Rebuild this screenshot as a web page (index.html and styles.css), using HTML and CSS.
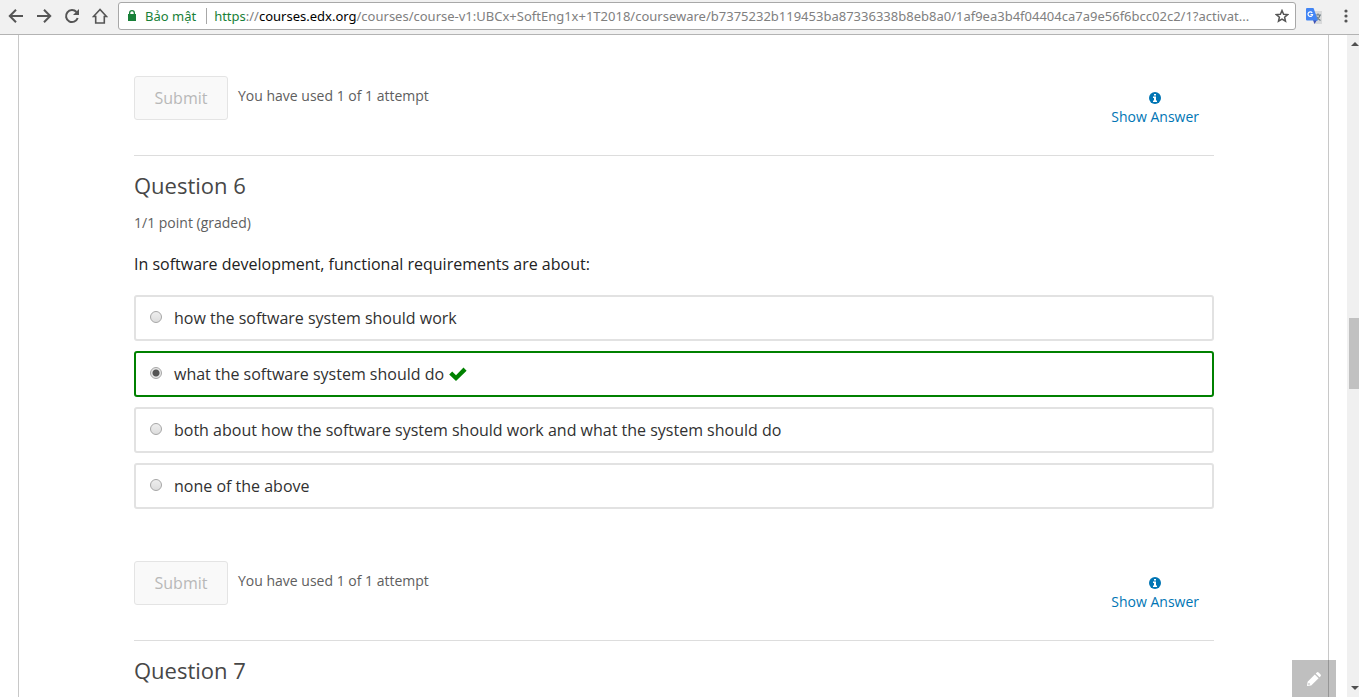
FILE: index.html
```
<!DOCTYPE html>
<html lang="en">
<head>
<meta charset="utf-8">
<title>Courseware</title>
<link rel="stylesheet" href="styles.css">
</head>
<body>
<header class="toolbar">
  <nav class="nav-buttons">
    <button class="tool" aria-label="Back"><svg viewBox="0 0 16 16"><path d="M15 8H2M8 1.800L1.800 8L8 14.200"/></svg></button>
    <button class="tool" aria-label="Forward"><svg viewBox="0 0 16 16"><path d="M1 8h13M8 1.800L14.200 8L8 14.200"/></svg></button>
    <button class="tool" aria-label="Reload"><svg viewBox="0 0 16 16"><path d="M12.500 4A6 6 0 1 0 13.700 10"/><path class="solid" d="M15 1v6H9z"/></svg></button>
    <button class="tool home" aria-label="Home"><svg viewBox="0 0 16 16"><path d="M8 1.500L1.500 8.500h2.200V15h8.600V8.500h2.200z"/></svg></button>
  </nav>
  <div class="address">
    <svg class="lock" viewBox="0 0 8 11"><path fill="#188038" d="M0 4h1V3a3 3 0 0 1 6 0v1h1v7H0zM2.300 4h3.400V3a1.700 1.700 0 0 0-3.400 0z"/></svg>
    <span class="secure" lang="vi">Bảo mật</span>
    <div class="url" role="textbox" aria-label="Address"><span class="scheme">https</span>://<span class="host">courses.edx.org</span>/courses/course-v1:UBCx+SoftEng1x+1T2018/courseware/b7375232b119453ba87336338b8eb8a0/1af9ea3b4f04404ca7a9e56f6bcc02c2/1?activat...</div>
    <button class="star" aria-label="Bookmark"><svg viewBox="0 0 14 14"><path d="M7 1.500l1.600 3.700 4 .4-3 2.600.9 4L7 10.100l-3.500 2.100.9-4-3-2.600 4-.4z"/></svg></button>
  </div>
  <button class="translate" aria-label="Translate"><svg viewBox="0 0 16 16"><path fill="#d9dadb" d="M5 3h11v13H8z"/><path fill="none" stroke="#6c7c84" stroke-width="1.200" d="M9 7h6M12 5.500V7M14 7c-.5 2.500-2 4-4 5M10.500 8.500c.8 1.800 2 3 4 4"/><path fill="#3f51b5" d="M7 12h4l-2.500 4z"/><path fill="#4285f4" d="M1 0h6.500L12 12.500H1a1 1 0 0 1-1-1V1a1 1 0 0 1 1-1z"/><path fill="none" stroke="#fff" stroke-width="1.200" d="M6.200 4.800A2.300 2.300 0 1 0 6.600 6.500H4.500"/></svg></button>
  <button class="menu" aria-label="Menu"><svg viewBox="0 0 4 14"><circle cx="2" cy="2" r="1.600"/><circle cx="2" cy="7" r="1.600"/><circle cx="2" cy="12" r="1.600"/></svg></button>
</header>
<div class="viewport">
  <main class="page">
    <section class="problem">
      <div class="actions">
        <button class="submit" disabled>Submit</button>
        <span class="attempts">You have used 1 of 1 attempt</span>
        <button class="show-answer"><svg viewBox="0 0 12 12"><circle cx="6" cy="6" r="6" fill="#0075b4"/><path fill="#fff" d="M5 2h2v1.500H5zM4 4.500h3V8.500h1V10H4V8.500h1V6H4z"/></svg>Show Answer</button>
      </div>
    </section>
    <section class="problem">
      <h3 class="title">Question 6</h3>
      <p class="points">1/1 point (graded)</p>
      <fieldset class="choices">
        <legend class="prompt">In software development, functional requirements are about:</legend>
        <label class="choice"><input type="radio" name="q6"><span>how the software system should work</span></label>
        <label class="choice correct"><input type="radio" name="q6" checked><span>what the software system should do</span><svg viewBox="0 0 18 14"><path fill="#008100" d="M3.200 4.400L7 8.200 14.500 .6 17.600 3.700 7 14 .2 7.400z"/></svg></label>
        <label class="choice"><input type="radio" name="q6"><span>both about how the software system should work and what the system should do</span></label>
        <label class="choice"><input type="radio" name="q6"><span>none of the above</span></label>
      </fieldset>
      <div class="actions">
        <button class="submit" disabled>Submit</button>
        <span class="attempts">You have used 1 of 1 attempt</span>
        <button class="show-answer"><svg viewBox="0 0 12 12"><circle cx="6" cy="6" r="6" fill="#0075b4"/><path fill="#fff" d="M5 2h2v1.500H5zM4 4.500h3V8.500h1V10H4V8.500h1V6H4z"/></svg>Show Answer</button>
      </div>
    </section>
    <section class="problem">
      <h3 class="title">Question 7</h3>
    </section>
  </main>
  <div class="scrollbar" aria-hidden="true">
    <svg class="arrow" viewBox="0 0 8 4"><path d="M0 4l4-4 4 4z"/></svg>
    <div class="track"><div class="thumb"></div></div>
    <svg class="arrow" viewBox="0 0 8 4"><path d="M0 0h8L4 4z"/></svg>
  </div>
  <button class="edit" aria-label="Edit notes"><svg viewBox="0 0 16 16"><path fill="#fff" d="M1 15l.6-4.200L8.800 3.400l3.800 3.800-7.400 7.300zM9.700 2.500l1.100-1.100q.9-.8 1.800 0l2 2q.8.900 0 1.800l-1.100 1.100z"/><path fill="#bfbfbf" d="M2.300 12.300h1.400v1.400H2.300z"/></svg></button>
</div>
</body>
</html>
```
FILE: styles.css
```
* { box-sizing: border-box; }
body {
  margin: 0;
  height: 100vh;
  display: flex;
  flex-direction: column;
  overflow: hidden;
  background: #fff;
  font-family: "Open Sans", sans-serif;
  font-size: 16px;
  line-height: 24px;
  color: #313131;
}
button { font: inherit; border: 0; padding: 0; background: none; }
svg { display: block; flex: none; }

.toolbar {
  flex: none;
  display: flex;
  align-items: center;
  height: 35px;
  padding: 0 11px 3px 8px;
  background: #f1f1f1;
  border-bottom: 1px solid #b3b3b3;
}
.nav-buttons { display: flex; gap: 12px; margin-right: 10px; }
.tool svg { width: 16px; height: 16px; fill: none; stroke: #555; stroke-width: 2; }
.tool.home svg { stroke-width: 1.6; }
.tool .solid { fill: #555; stroke: none; }
.address {
  flex: 1;
  min-width: 0;
  display: flex;
  align-items: center;
  height: 28px;
  padding: 0 6px 0 9px;
  background: #fff;
  border: 1px solid #a8a8a8;
  border-radius: 3px;
  font-family: "Noto Sans", "Open Sans", sans-serif;
  font-size: 13px;
  line-height: 18px;
}
.lock { width: 8px; height: 11px; }
.secure {
  margin-left: 9px;
  padding-right: 10px;
  border-right: 1px solid #a8a8a8;
  line-height: 16px;
  color: #188038;
  white-space: nowrap;
}
.url { flex: 1; min-width: 0; margin-left: 7px; overflow: hidden; white-space: nowrap; color: #808080; }
.scheme { color: #188038; }
.host { color: #000; }
.star svg { width: 14px; height: 14px; fill: none; stroke: #555; stroke-width: 1.5; }
.translate { margin-left: 10px; }
.translate svg { width: 16px; height: 16px; }
.menu { margin-left: 22px; }
.menu svg { width: 4px; height: 14px; fill: #555; }

.viewport { position: relative; flex: 1; min-height: 0; display: flex; overflow: hidden; }
.page {
  flex: 1;
  min-width: 0;
  margin: 0 18px;
  padding: 41px 114px 0 115px;
  border: 1px solid #c8c8c8;
  border-width: 0 1px;
}
.problem + .problem { margin-top: 35px; padding-top: 15px; border-top: 1px solid #ddd; }
.actions { display: flex; align-items: flex-start; }
.submit {
  width: 94px;
  height: 44px;
  border: 1px solid #e4e4e4;
  border-radius: 3px;
  background: #f9f9f9;
  color: #b8b8b8;
}
.attempts { margin: 8px 0 0 10px; font-size: 14px; color: #5e5e5e; }
.show-answer {
  display: flex;
  flex-direction: column;
  align-items: center;
  gap: 3px;
  margin: 16px 15px 0 auto;
  font-size: 14px;
  line-height: 20px;
  height: 28px;
  color: #0075b4;
}
.show-answer svg { width: 12px; height: 12px; }
.title { margin: 0; font-size: 22px; font-weight: 400; line-height: 28px; color: #474747; }
.points { margin: 14px 0 19px; font-size: 14px; line-height: 20px; color: #5e5e5e; }
.choices { min-width: 0; margin: 0 0 52px; padding: 0; border: 0; }
.prompt { padding: 0; margin-bottom: 19px; color: #222; }
.choice {
  display: flex;
  align-items: center;
  height: 46px;
  padding: 0 14px;
  border: 2px solid #e2e2e2;
  border-radius: 3px;
}
.choice + .choice { margin-top: 10px; }
.choice.correct { border-color: #008100; }
.choice input {
  appearance: none;
  flex: none;
  width: 12px;
  height: 12px;
  margin: 0 12px 2px 0;
  border: 1px solid #a6a6a6;
  border-radius: 50%;
  background: linear-gradient(#eee, #ddd);
}
.choice input:checked { background: radial-gradient(circle, #555 0 3px, #e6e6e6 4px); }
.choice svg { width: 18px; height: 14px; margin-left: 5px; }

.scrollbar {
  flex: none;
  width: 12px;
  display: flex;
  flex-direction: column;
  align-items: flex-end;
  padding: 7px 0;
  background: #f0f0f0;
}
.arrow { width: 8px; height: 4px; fill: #505050; }
.track { flex: 1; align-self: stretch; padding-left: 2px; display: flex; flex-direction: column; }
.track::before { content: ""; flex: 272; }
.track::after { content: ""; flex: 297; }
.thumb { flex: 71; background: #c1c1c1; }
.edit {
  position: absolute;
  right: 23px;
  bottom: 0;
  width: 44px;
  height: 37px;
  display: flex;
  align-items: center;
  justify-content: center;
  background: rgba(0, 0, 0, .25);
}
.edit svg { width: 16px; height: 16px; }
```
